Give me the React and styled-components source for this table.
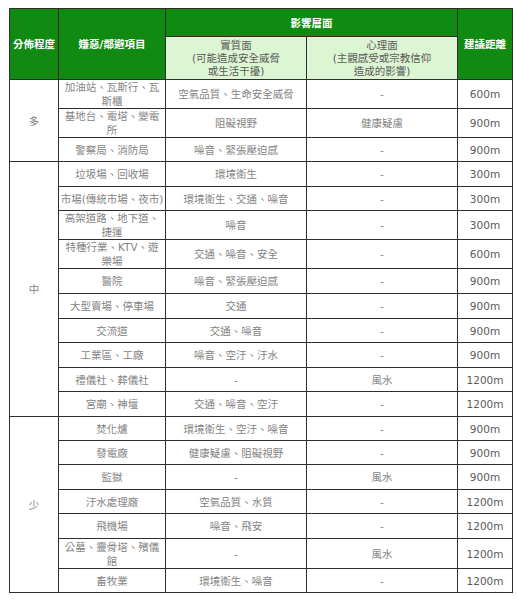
import React from 'react';
import styled, { createGlobalStyle } from "styled-components";

const GlobalStyle = createGlobalStyle`
  html, body {
    margin: 0;
    padding: 0;
    background: #ffffff;
  }
  body {
    font-family: "DejaVu Sans", "Noto Sans CJK TC", sans-serif;
  }
`;

const Page = styled.div`
  padding: 8px 0 0 9px;
  width: 517px;
  height: 599px;
  box-sizing: border-box;
`;

const Table = styled.table`
  border-collapse: collapse;
  table-layout: fixed;
  width: 503px;
  font-size: 10.5px;
  color: #848484;
`;

const Col = styled.col`
  width: ${({ w }) => w}px;
`;

const Row = styled.tr`
  height: ${({ h }) => h}px;
`;

const Head = styled.th`
  background: #108a10;
  color: #ffffff;
  font-weight: bold;
  border: 1px solid #2e2e2e;
  padding: 0;
  text-align: center;
  vertical-align: middle;
  line-height: 14px;
`;

const SubHead = styled.th`
  background: #dcf5d3;
  color: #5a5a5a;
  font-weight: normal;
  border: 1px solid #2e2e2e;
  padding: 1px 0 0;
  text-align: center;
  vertical-align: middle;
  line-height: 13px;
  font-size: 10.5px;
`;

const Cell = styled.td`
  border: 1px solid #2e2e2e;
  padding: 0 ${({ nowrap }) => (nowrap ? 0 : 4)}px;
  text-align: center;
  vertical-align: middle;
  line-height: 14px;
  white-space: ${({ nowrap }) => (nowrap ? "nowrap" : "normal")};
  color: ${({ dark }) => (dark ? "#5a5a5a" : "#848484")};
`;

const groups = [
  {
    level: "多",
    rows: [
      ["加油站、瓦斯行、瓦斯櫃", "空氣品質、生命安全威脅", "-", "600m", 29],
      ["基地台、電塔、變電所", "阻礙視野", "健康疑慮", "900m", 29],
      ["警察局、消防局", "噪音、緊張壓迫感", "-", "900m", 24],
    ],
  },
  {
    level: "中",
    rows: [
      ["垃圾場、回收場", "環境衛生", "-", "300m", 25],
      ["市場(傳統市場、夜市)", "環境衛生、交通、噪音", "-", "300m", 24, true],
      ["高架道路、地下道、捷運", "噪音", "-", "300m", 29],
      ["特種行業、KTV、遊樂場", "交通、噪音、安全", "-", "600m", 29],
      ["醫院", "噪音、緊張壓迫感", "-", "900m", 25],
      ["大型賣場、停車場", "交通", "-", "900m", 25],
      ["交流道", "交通、噪音", "-", "900m", 24],
      ["工業區、工廠", "噪音、空汙、汙水", "-", "900m", 25],
      ["禮儀社、葬儀社", "-", "風水", "1200m", 24],
      ["宮廟、神壇", "交通、噪音、空汙", "-", "1200m", 25],
    ],
  },
  {
    level: "少",
    rows: [
      ["焚化爐", "環境衛生、空汙、噪音", "-", "900m", 24],
      ["發電廠", "健康疑慮、阻礙視野", "-", "900m", 24],
      ["監獄", "-", "風水", "900m", 25],
      ["汙水處理廠", "空氣品質、水質", "-", "1200m", 24],
      ["飛機場", "噪音、飛安", "-", "1200m", 25],
      ["公墓、靈骨塔、殯儀館", "-", "風水", "1200m", 30],
      ["畜牧業", "環境衛生、噪音", "-", "1200m", 24],
    ],
  },
];

const App = () => {
  return (
    <>
      <GlobalStyle />
      <Page>
        <Table>
          <colgroup>
            <Col w={49} />
            <Col w={107} />
            <Col w={141} />
            <Col w={151} />
            <Col w={55} />
          </colgroup>
          <thead>
            <Row h={28}>
              <Head rowSpan={2}>分佈程度</Head>
              <Head rowSpan={2}>嫌惡/鄰避項目</Head>
              <Head colSpan={2}>影響層面</Head>
              <Head rowSpan={2}>建議距離</Head>
            </Row>
            <Row h={43}>
              <SubHead>實質面<br />(可能造成安全威脅<br />或生活干擾)</SubHead>
              <SubHead>心理面<br />(主觀感受或宗教信仰<br />造成的影響)</SubHead>
            </Row>
          </thead>
          <tbody>
            {groups.map((g) =>
              g.rows.map((r, i) => (
                <Row h={r[4]} key={g.level + i}>
                  {i === 0 && <Cell rowSpan={g.rows.length}>{g.level}</Cell>}
                  <Cell nowrap={r[5]}>{r[0]}</Cell>
                  <Cell>{r[1]}</Cell>
                  <Cell>{r[2]}</Cell>
                  <Cell dark>{r[3]}</Cell>
                </Row>
              ))
            )}
          </tbody>
        </Table>
      </Page>
    </>
  );
};

export default App;
